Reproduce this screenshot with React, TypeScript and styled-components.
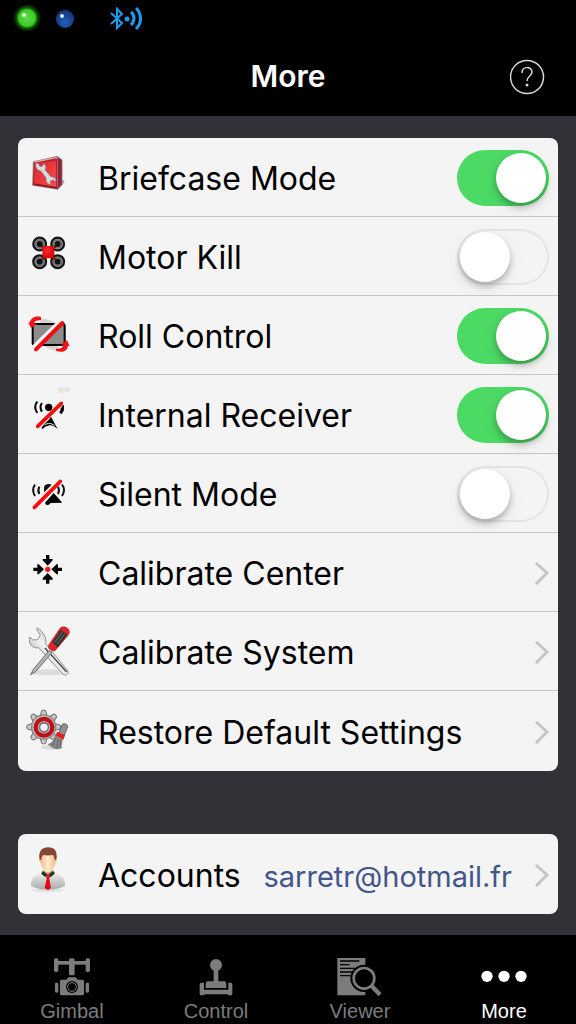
import React, { useState } from "react";
import styled, { createGlobalStyle } from "styled-components";

const GlobalStyle = createGlobalStyle`
  * { box-sizing: border-box; }
  body {
    margin: 0;
    background: #313137;
    font-family: Inter, "Liberation Sans", sans-serif;
  }
`;

const Screen = styled.div`
  min-height: 100vh;
  display: flex;
  flex-direction: column;
  background: #313137;
`;

const Header = styled.header`
  background: #000;
`;

const StatusBar = styled.div`
  height: 38px;
  padding: 0 12px;
  display: flex;
  align-items: center;
`;

const TitleBar = styled.div`
  height: 78px;
  padding: 0 30px;
  display: grid;
  grid-template-columns: 36px 1fr 36px;
  align-items: center;
`;

const Title = styled.h1`
  grid-column: 2;
  margin: 0;
  padding-bottom: 2px;
  text-align: center;
  color: #fff;
  font-size: 30px;
  line-height: 36px;
  font-weight: 600;
`;

const HelpButton = styled.button`
  width: 36px;
  height: 36px;
  padding: 0;
  border: 0;
  background: none;
  cursor: pointer;
`;

const Main = styled.main`
  flex: 1;
  padding: 22px 18px 21px;
  display: flex;
  flex-direction: column;
  gap: 63px;
`;

const Card = styled.ul`
  margin: 0;
  padding: 0 0 1px;
  list-style: none;
  background: #f4f4f4;
  border-radius: 8px;
  overflow: hidden;
`;

const Item = styled.li`
  height: 79px;
  border-bottom: 1px solid #c6c6ca;
  &:last-child { border-bottom: 0; }
`;

const ToggleRow = styled.label`
  height: 100%;
  padding-right: 9px;
  display: flex;
  align-items: center;
  color: #000;
  cursor: pointer;
`;

const LinkRow = styled.a`
  height: 100%;
  padding-right: 9px;
  display: flex;
  align-items: center;
  color: #000;
  text-decoration: none;
`;

const RowSvg = styled.svg`
  width: 60px;
  height: 79px;
  margin-right: 20px;
  flex: none;
`;

const RowLabel = styled.span<{ $grow?: boolean }>`
  flex: ${(p) => (p.$grow === false ? "none" : "1")};
  padding-top: 4px;
  font-size: 32px;
  line-height: 40px;
  white-space: nowrap;
`;

const Detail = styled.span`
  flex: 1;
  padding-top: 6px;
  padding-right: 22px;
  text-align: right;
  color: #42568b;
  font-size: 29px;
  line-height: 36px;
`;

const ChevronSvg = styled.svg`
  width: 15px;
  height: 26px;
  margin-top: 2px;
  flex: none;
`;

const Switch = styled.input`
  appearance: none;
  flex: none;
  width: 92px;
  height: 56px;
  margin: 2px 0 0;
  padding: 3px;
  display: flex;
  border-radius: 28px;
  background: #f4f4f4;
  box-shadow: inset 0 0 0 2px #e4e4e4;
  cursor: pointer;

  &::before {
    content: "";
    width: 50px;
    height: 50px;
    border-radius: 50%;
    background: #fff;
    box-shadow: 0 4px 6px rgba(0, 0, 0, 0.24), 0 6px 16px rgba(0, 0, 0, 0.08);
  }

  &:checked {
    justify-content: flex-end;
    background: #4cd964;
    box-shadow: none;
  }
`;

const TabBar = styled.nav`
  height: 89px;
  display: grid;
  grid-template-columns: repeat(4, 1fr);
  background: #000;
`;

const Tab = styled.a<{ $active?: boolean }>`
  padding-top: 22px;
  display: flex;
  flex-direction: column;
  align-items: center;
  gap: 2px;
  color: ${(p) => (p.$active ? "#fff" : "#7c7c7c")};
  font-family: "Liberation Sans", Arial, sans-serif;
  font-size: 20px;
  line-height: 24px;
  text-decoration: none;
`;

const TabSvg = styled.svg`
  width: 48px;
  height: 40px;
  flex: none;
`;

type IconProps = { top: number; children: React.ReactNode };

/* Row artwork is drawn at three units per pixel; top picks the band that fills the row. */
const RowIcon = ({ top, children }: IconProps) => (
  <RowSvg viewBox={`0 ${top} 180 237`} aria-hidden="true">{children}</RowSvg>
);

const BriefcaseIcon = () => (
  <RowIcon top={9}>
    <defs>
      <linearGradient id="caseFront" x1="0" y1="0" x2="1" y2="1">
        <stop offset="0" stopColor="#d8242c" />
        <stop offset="1" stopColor="#ff4a4c" />
      </linearGradient>
    </defs>
    <path d="M118 158l22-16-4-8-16 6z" fill="#aaa" />
    <path d="M46 80l72-16 14 11v74l-12 14-76-12z" fill="#b32028" stroke="#777" strokeWidth="2" />
    <path d="M50 84l64-7v78l-66-9z" fill="url(#caseFront)" />
    <path d="M49 81l70-14v93" fill="none" stroke="#d9a9af" strokeWidth="4" />
    <path d="M119 67l12 9v72l-12 12z" fill="#96202e" stroke="#858" strokeWidth="2" />
    <path d="M46 147l72 12" stroke="#8b1a20" strokeWidth="4" />
    <path d="M53 84l8 1 5 9 8-1 2-8c8 5 10 12 6 20l17 20c10-1 17 6 15 16l-8-6-9 4 2 10c-11-1-17-9-15-20L68 108c-10-1-17-10-15-24z" fill="#d8d8d8" stroke="#8b5c5e" strokeWidth="2" />
  </RowIcon>
);

const DroneIcon = () => (
  <RowIcon top={246}>
    <defs>
      <radialGradient id="hub" cx="0.4" cy="0.35" r="0.7">
        <stop offset="0" stopColor="#ff2c2c" />
        <stop offset="1" stopColor="#cf0000" />
      </radialGradient>
    </defs>
    {[[65, 327], [119, 327], [65, 380], [119, 380]].map(([x, y]) => (
      <g key={`${x}-${y}`}>
        <circle cx={x} cy={y} r="19" fill="#b4b4b4" stroke="#161616" strokeWidth="7" />
        <circle cx={x} cy={y} r="12" fill="none" stroke="#6c6c6c" strokeWidth="5" />
      </g>
    ))}
    <path d="M70 332l43 43M114 332l-44 43" stroke="#9a1111" strokeWidth="7" />
    <rect x="73" y="333" width="36" height="37" rx="12" fill="url(#hub)" />
    {[[65, 327], [119, 327], [65, 380], [119, 380]].map(([x, y]) => (
      <circle key={`${x}-${y}`} cx={x} cy={y} r="9" fill="#0c1113" />
    ))}
  </RowIcon>
);

const RollIcon = () => (
  <RowIcon top={3}>
    <path d="M69 72c20 0 36 5 44 14H67zM75 150c12 11 28 16 44 17v-16z" fill="#d2d2d2" />
    <rect x="44" y="87" width="96" height="63" rx="6" fill="#8c8c8c" stroke="#000" strokeWidth="6" />
    <path d="M69 66c-17-5-32 4-34 17l-5-1 9 17 17-11-8-3c2-7 8-10 21-9z" fill="#f81018" />
    <path d="M114 167c17 7 34 2 36-15l5 1-8-17-18 12 8 2c-2 8-9 12-23 11z" fill="#f81018" />
    <path d="M49 158L129 80" stroke="#f4f4f4" strokeWidth="18" />
    <path d="M54 163L133 84" stroke="#f40b0b" strokeWidth="12" strokeLinecap="round" />
  </RowIcon>
);

const ReceiverIcon = () => (
  <RowIcon top={240}>
    <defs>
      <linearGradient id="paper" x1="0" y1="0" x2="0" y2="1">
        <stop offset="0" stopColor="#e4dccd" />
        <stop offset="1" stopColor="#f3efe6" />
      </linearGradient>
    </defs>
    <path d="M120 278h36v12l-36 7z" fill="url(#paper)" />
    <path d="M58 320c-8 10-8 23 0 34M72 324c-6 8-6 17 0 26M126 354c5-6 6-10 5-17M134 331c3 8 2 16-6 25" fill="none" stroke="#000" strokeWidth="6" />
    <path d="M99 365l20 37c-10-9-20-13-29-10-8 2-13 6-16 10l-4-3 8-11 12-11z" fill="#000" />
    <path d="M79 390c12-7 20-6 31 2" fill="none" stroke="#f4f4f4" strokeWidth="3" />
    <path d="M54 391L128 321" stroke="#f4f4f4" strokeWidth="15" />
    <circle cx="92" cy="337" r="11" fill="#000" />
    <path d="M59 394L130 325" stroke="#f40b0b" strokeWidth="11" strokeLinecap="round" />
  </RowIcon>
);

const SilentIcon = () => (
  <RowIcon top={-3}>
    <path d="M51 89c-7 10-7 23 0 34M64 95c-4 8-4 15 0 22M120 95c4 7 4 15 0 22M132 89c8 10 7 23 0 34" fill="none" stroke="#111" strokeWidth="6" />
    <path d="M78 109V98c0-15 28-15 28 0v7l-18 20z" fill="#111" />
    <path d="M107 114l26 29-36 1c-3 8-13 8-16-1z" fill="#000" />
    <path d="M45 153l78-78" stroke="#f4f4f4" strokeWidth="11" />
    <path d="M49 157L127 79" stroke="#f80c10" strokeWidth="11" strokeLinecap="round" />
  </RowIcon>
);

const CenterIcon = () => (
  <RowIcon top={234}>
    <circle cx="89" cy="343" r="8" fill="#f41414" />
    {[0, 90, 180, 270].map((angle) => (
      <path key={angle} transform={`rotate(${angle} 89 343)`} d="M84 300h10v12h10v4l-15 16-15-16v-4h10z" fill="#000" />
    ))}
  </RowIcon>
);

const ToolsIcon = () => (
  <RowIcon top={0}>
    <defs>
      <linearGradient id="steel" x1="0" y1="1" x2="1" y2="0">
        <stop offset="0" stopColor="#8a8a8a" />
        <stop offset="0.5" stopColor="#f4f4f4" />
        <stop offset="1" stopColor="#777" />
      </linearGradient>
    </defs>
    <ellipse cx="91" cy="181" rx="52" ry="9" fill="#dcdcdc" />
    <path d="M36 75c-7 19 8 36 26 32l74 80c8 6 18-4 14-10L83 96c4-18-6-35-25-49l-2 5 11 17-8 14-15 1z" fill="url(#steel)" stroke="#909090" strokeWidth="3" />
    <path d="M81 108l65 72" stroke="#555" strokeWidth="5" />
    <path d="M93 116l-47 56-8 16 14-8 50-58z" fill="#b5b5b5" stroke="#6f6f6f" strokeWidth="3" />
    <path d="M91 99l34-50c9-12 31-1 30 12-1 5-3 8-6 12l-37 43c-8 6-26-7-21-17z" fill="#db252c" />
    <path d="M103 90l25-37 20 15-29 39z" fill="#353535" />
    <path d="M111 90l23-31M117 96l23-30" stroke="#888" strokeWidth="2" />
  </RowIcon>
);

const RestoreIcon = () => (
  <RowIcon top={237}>
    <defs>
      <radialGradient id="gear">
        <stop offset="0" stopColor="#aaa" />
        <stop offset="0.8" stopColor="#d0d0d0" />
        <stop offset="1" stopColor="#777" />
      </radialGradient>
    </defs>
    <ellipse cx="102" cy="406" rx="34" ry="7" fill="#dcdcdc" />
    {[0, 45, 90, 135, 180, 225, 270, 315].map((angle) => (
      <path key={angle} transform={`rotate(${angle} 77 345)`} d="M66 314l5-18q6-4 12 0l5 18z" fill="#c9c9c9" stroke="#6f6f6f" strokeWidth="3" />
    ))}
    <circle cx="77" cy="345" r="38" fill="url(#gear)" />
    <circle cx="78" cy="346" r="25" fill="#f2f2f2" stroke="#bd1018" strokeWidth="13" />
    <circle cx="78" cy="346" r="14" fill="#f4f4f4" stroke="#777" strokeWidth="6" />
    <path d="M121 367l11-29c7-6 18-1 17 7l-13 31z" fill="#8f8f8f" stroke="#666" strokeWidth="3" />
    <path d="M110 371l24 11-4 27c-12 7-28 1-41-12 12-4 19-13 21-26z" fill="#858585" />
    <path d="M113 377l-9 25M121 380l-5 28M128 382l-2 26" stroke="#606060" strokeWidth="2" />
    <path d="M117 359l24 11-5 13-23-12z" fill="#e61b20" />
  </RowIcon>
);

const PersonIcon = () => (
  <RowIcon top={12}>
    <defs>
      <linearGradient id="shirt" x1="0" y1="0" x2="0" y2="1">
        <stop offset="0" stopColor="#ececec" />
        <stop offset="1" stopColor="#aaa" />
      </linearGradient>
      <linearGradient id="skin">
        <stop offset="0" stopColor="#edb77f" />
        <stop offset="0.5" stopColor="#ffebd0" />
        <stop offset="1" stopColor="#e9b57b" />
      </linearGradient>
    </defs>
    <ellipse cx="89" cy="181" rx="47" ry="6" fill="#e2e2e2" />
    <path d="M39 168c0-23 8-33 31-39h40c23 5 31 17 31 39-26 15-78 14-102 0z" fill="url(#shirt)" />
    <path d="M78 116h25v16l-13 8-13-8z" fill="#dfab78" />
    <path d="M66 83c-2-19 7-25 24-25s26 8 24 26l3 8-5 8c-4 15-12 27-22 27s-18-12-22-27l-5-8z" fill="url(#skin)" />
    <path d="M64 86C62 62 72 52 91 52c18 0 27 10 25 34l-5 5c-3-7-3-12-6-16-10 2-21 2-30 0-4 4-4 11-6 16z" fill="#84472f" />
    <path d="M74 122l-4 9 11 10 9-7 9 7 12-11-6-8-15 12z" fill="#26342a" />
    <path d="M84 136h13l-3 10 5 27-9 8-10-8 6-27z" fill="#e00916" />
  </RowIcon>
);

const Chevron = () => (
  <ChevronSvg viewBox="0 0 15 26" fill="none" stroke="#c5c5c8" strokeWidth="3" aria-hidden="true">
    <path d="M2 3l11 10L2 24" />
  </ChevronSvg>
);

const StatusIcons = () => (
  <svg width="134" height="38" viewBox="0 0 134 38" role="img" aria-label="Connected over Bluetooth">
    <defs>
      <radialGradient id="glow">
        <stop offset="0.5" stopColor="#25d80d" />
        <stop offset="1" stopColor="#062f00" stopOpacity="0" />
      </radialGradient>
      <radialGradient id="green">
        <stop offset="0" stopColor="#63dc4c" />
        <stop offset="1" stopColor="#37c922" />
      </radialGradient>
      <radialGradient id="blue" cy="0.7">
        <stop offset="0" stopColor="#2462ba" />
        <stop offset="1" stopColor="#173c86" />
      </radialGradient>
    </defs>
    <circle cx="15" cy="18" r="15" fill="url(#glow)" />
    <circle cx="15" cy="18" r="9" fill="url(#green)" />
    <circle cx="12" cy="15" r="2" fill="#e6ffdc" />
    <circle cx="53" cy="19" r="9" fill="url(#blue)" />
    <circle cx="50" cy="16" r="2" fill="#d3ebff" />
    <g fill="none" stroke="#1a9cf0">
      <path d="M99 13l11 10-5 5V9l5 5-11 10" strokeWidth="2" />
      <path d="M119 12c4 3 4 9 0 13M124 8c6 6 6 15 0 21" strokeWidth="3" />
    </g>
    <circle cx="115" cy="19" r="2.500" fill="#1a9cf0" />
  </svg>
);

const GimbalIcon = () => (
  <TabSvg viewBox="144 81 144 120" fill="currentColor" aria-hidden="true">
    <rect x="162" y="85" width="13" height="41" rx="5" />
    <rect x="257" y="85" width="13" height="41" rx="5" />
    <rect x="170" y="93" width="92" height="11" />
    <rect x="207" y="85" width="17" height="51" rx="5" />
    <rect x="165" y="158" width="10" height="30" rx="4" />
    <rect x="257" y="158" width="10" height="30" rx="4" />
    <path d="M185 149h14l6-7h22l6 7h14q5 0 5 5v37q0 5-5 5h-62q-5 0-5-5v-37q0-5 5-5z" />
    <circle cx="216" cy="171" r="18" fill="#000" />
    <circle cx="216" cy="171" r="13" fill="none" stroke="currentColor" strokeWidth="3" />
  </TabSvg>
);

const ControlIcon = () => (
  <TabSvg viewBox="576 81 144 120" fill="currentColor" aria-hidden="true">
    <circle cx="648" cy="105" r="18" />
    <rect x="641" y="117" width="14" height="42" />
    <path d="M624 154h48q7 0 7 7v13h-62v-13q0-7 7-7z" />
    <path d="M604 158h8v21h73v-21h7q5 0 5 5v28q0 5-5 5h-8v-3h-71v3h-9q-5 0-5-5v-28q0-5 5-5z" />
  </TabSvg>
);

const ViewerIcon = () => (
  <TabSvg viewBox="144 81 144 120" fill="currentColor" aria-hidden="true">
    <path d="M148 84h84v112h-84z" />
    <path d="M156 93h58M156 104h29M156 115h45M156 126h40M156 137h35" stroke="#000" strokeWidth="4" />
    <circle cx="228" cy="145" r="41" fill="#000" />
    <path d="M242 161l34 35" stroke="#000" strokeWidth="25" />
    <path d="M249 166l27 28" stroke="currentColor" strokeWidth="13" />
    <circle cx="228" cy="145" r="31" fill="#000" stroke="currentColor" strokeWidth="8" />
  </TabSvg>
);

const MoreIcon = () => (
  <TabSvg viewBox="576 81 144 120" fill="currentColor" aria-hidden="true">
    <circle cx="597" cy="139" r="17" />
    <circle cx="648" cy="139" r="17" />
    <circle cx="699" cy="139" r="17" />
  </TabSvg>
);

const toggles = [
  { label: "Briefcase Mode", Icon: BriefcaseIcon, on: true },
  { label: "Motor Kill", Icon: DroneIcon, on: false },
  { label: "Roll Control", Icon: RollIcon, on: true },
  { label: "Internal Receiver", Icon: ReceiverIcon, on: true },
  { label: "Silent Mode", Icon: SilentIcon, on: false },
];

const links = [
  { label: "Calibrate Center", Icon: CenterIcon, href: "#calibrate-center" },
  { label: "Calibrate System", Icon: ToolsIcon, href: "#calibrate-system" },
  { label: "Restore Default Settings", Icon: RestoreIcon, href: "#restore" },
];

const tabs = [
  { label: "Gimbal", Icon: GimbalIcon },
  { label: "Control", Icon: ControlIcon },
  { label: "Viewer", Icon: ViewerIcon },
  { label: "More", Icon: MoreIcon },
];

export default function App() {
  const [states, setStates] = useState(toggles.map((t) => t.on));
  const flip = (index: number) =>
    setStates((current) => current.map((on, i) => (i === index ? !on : on)));

  return (
    <>
      <GlobalStyle />
      <Screen>
        <Header>
          <StatusBar>
            <StatusIcons />
          </StatusBar>
          <TitleBar>
            <Title>More</Title>
            <HelpButton type="button" aria-label="Help">
              <svg width="36" height="36" viewBox="0 0 36 36" fill="none" stroke="#d8d8d8" aria-hidden="true">
                <circle cx="17" cy="18" r="16.500" strokeWidth="1.500" />
                <path d="M12 14c0-7 10-7 10-1 0 4-5 4-5 9" strokeWidth="1.500" />
                <circle cx="17" cy="26" r="1.500" fill="#d8d8d8" stroke="none" />
              </svg>
            </HelpButton>
          </TitleBar>
        </Header>

        <Main>
          <Card>
            {toggles.map(({ label, Icon }, i) => (
              <Item key={label}>
                <ToggleRow>
                  <Icon />
                  <RowLabel>{label}</RowLabel>
                  <Switch type="checkbox" checked={states[i]} onChange={() => flip(i)} />
                </ToggleRow>
              </Item>
            ))}
            {links.map(({ label, Icon, href }) => (
              <Item key={label}>
                <LinkRow href={href}>
                  <Icon />
                  <RowLabel>{label}</RowLabel>
                  <Chevron />
                </LinkRow>
              </Item>
            ))}
          </Card>

          <Card>
            <Item>
              <LinkRow href="#accounts">
                <PersonIcon />
                <RowLabel $grow={false}>Accounts</RowLabel>
                <Detail>sarretr@hotmail.fr</Detail>
                <Chevron />
              </LinkRow>
            </Item>
          </Card>
        </Main>

        <TabBar>
          {tabs.map(({ label, Icon }) => (
            <Tab
              key={label}
              href={`#${label.toLowerCase()}`}
              $active={label === "More"}
              aria-current={label === "More" ? "page" : undefined}
            >
              <Icon />
              {label}
            </Tab>
          ))}
        </TabBar>
      </Screen>
    </>
  );
}
